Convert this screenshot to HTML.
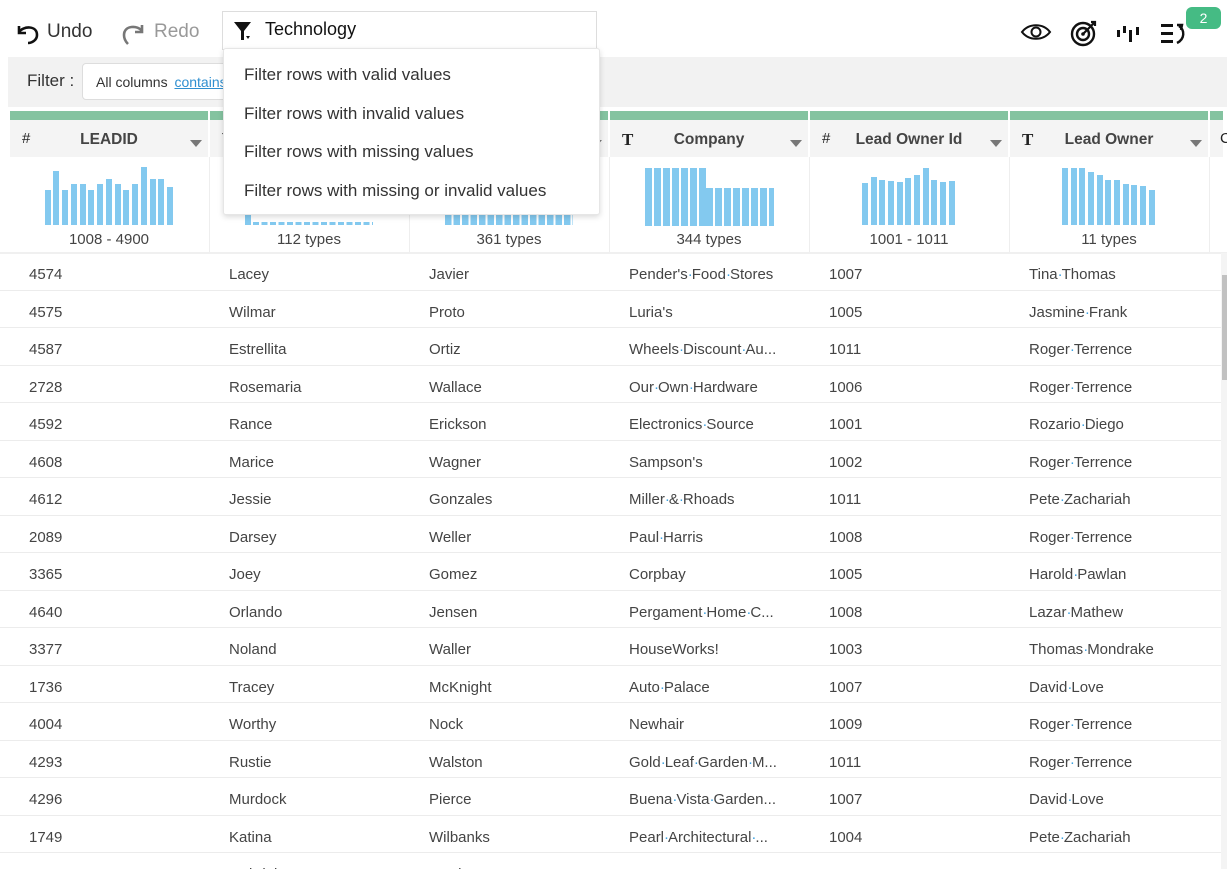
<!DOCTYPE html>
<html><head><meta charset="utf-8">
<style>
*{box-sizing:border-box;margin:0;padding:0}
html,body{width:1227px;height:869px;overflow:hidden}
body{background:#fff;font-family:"Liberation Sans",sans-serif;color:#444;position:relative}
.a{position:absolute}
.bar{position:absolute;background:#83c9ef;top:auto;width:6px}
.hd{position:absolute;top:120px;height:37px;background:#f4f4f4;width:198px;font-size:15.5px;font-weight:bold;color:#444}
.hd .t{position:absolute;left:0;right:0;top:11px;text-align:center}
.hd .ic{position:absolute;left:12px;top:10px;font-size:15px;color:#222;font-weight:normal}
.hd .ar{position:absolute;right:6px;top:20px;width:0;height:0;border-left:6px solid transparent;border-right:6px solid transparent;border-top:7px solid #777}
.gr{position:absolute;top:111px;height:9px;background:#84c3a0;width:198px}
.lab{position:absolute;top:231px;width:198px;text-align:center;font-size:15px;color:#444}
.row{position:absolute;left:0;width:1221px;height:37.5px;border-bottom:1px solid #ececec;font-size:15px;color:#444}
.row span{position:absolute;top:13px;white-space:nowrap}
.row span:nth-child(1){left:29px}.row span:nth-child(2){left:229px}.row span:nth-child(3){left:429px}
.row span:nth-child(4){left:629px}.row span:nth-child(5){left:829px}.row span:nth-child(6){left:1029px}
i{font-style:normal;color:#3ba0e0;display:inline-block;width:4px;text-align:center}
.dd div{position:absolute;left:20px;font-size:17px;color:#333}
</style></head><body>
<svg class="a" style="left:15px;top:21px" width="26" height="24" viewBox="0 0 26 24"><path d="M4 5 L4 12 L11 12 M4 11 C8 5 22 4 22 14 C22 19 17 22 13 22" fill="none" stroke="#111" stroke-width="2.6"/></svg>
<div class="a" style="left:47px;top:21px;font-size:19px;color:#333">Undo</div>
<svg class="a" style="left:120px;top:21px" width="26" height="26" viewBox="0 0 26 26"><path d="M22 4 L22 11 L15 11 M22 10 C18 4 4 4 4 14 C4 18 6 21 8 23" fill="none" stroke="#777" stroke-width="2.6"/></svg>
<div class="a" style="left:154px;top:21px;font-size:19px;color:#999">Redo</div>
<div class="a" style="left:222px;top:11px;width:375px;height:39px;border:1px solid #ddd;background:#fff"></div>
<svg class="a" style="left:233px;top:21px" width="22" height="20" viewBox="0 0 22 20"><path d="M1 1 L18 1 L11 10 L11 19 L8 19 L8 10 Z" fill="#111"/><path d="M13 15 L17 15 L15 18Z" fill="#111"/></svg>
<div class="a" style="left:265px;top:19px;font-size:18px;color:#111">Technology</div>
<svg class="a" style="left:1020px;top:22px" width="32" height="20" viewBox="0 0 32 20"><path d="M2 10 C9 1 23 1 30 10 C23 19 9 19 2 10Z" fill="none" stroke="#111" stroke-width="2"/><circle cx="16" cy="10" r="4.5" fill="none" stroke="#111" stroke-width="2"/></svg>
<svg class="a" style="left:1070px;top:19px" width="28" height="28" viewBox="0 0 28 28"><circle cx="13" cy="15" r="11" fill="none" stroke="#111" stroke-width="2.4"/><circle cx="13" cy="15" r="6" fill="none" stroke="#111" stroke-width="2.4"/><circle cx="13" cy="15" r="1.8" fill="#111"/><path d="M13 15 L24 4 M21 3 L25 3 L25 7" fill="none" stroke="#111" stroke-width="2.2"/></svg>
<svg class="a" style="left:1116px;top:25px" width="26" height="18" viewBox="0 0 26 18"><rect x="1" y="5" width="3" height="7" fill="#111"/><rect x="7" y="1" width="3" height="7" fill="#111"/><rect x="13" y="5" width="3" height="12" fill="#111"/><rect x="20" y="2" width="3" height="8" fill="#111"/></svg>
<svg class="a" style="left:1160px;top:22px" width="28" height="24" viewBox="0 0 28 24"><rect x="1" y="2" width="12" height="3" fill="#111"/><rect x="1" y="10" width="12" height="3" fill="#111"/><rect x="1" y="18" width="12" height="3" fill="#111"/><path d="M17 21 C25 17 25 8 19 4 M17 3 L22 3 L21 8" fill="none" stroke="#111" stroke-width="2.4"/></svg>
<div class="a" style="left:1186px;top:7px;width:35px;height:22px;background:#45bb84;border-radius:6px;color:#fff;font-size:14px;text-align:center;line-height:22px">2</div>
<div class="a" style="left:8px;top:57px;width:1219px;height:50px;background:#f2f2f2"></div>
<div class="a" style="left:27px;top:71px;font-size:17px;color:#333">Filter :</div>
<div class="a" style="left:82px;top:63px;width:160px;height:37px;background:#fff;border:1px solid #ddd;border-radius:4px"></div>
<div class="a" style="left:96px;top:74px;font-size:14px;color:#333">All columns <span style="color:#2f8fd0;text-decoration:underline;margin-left:3px">contains</span></div>
<div class="gr" style="left:10px"></div><div class="gr" style="left:210px"></div><div class="gr" style="left:410px"></div><div class="gr" style="left:610px"></div><div class="gr" style="left:810px"></div><div class="gr" style="left:1010px"></div><div class="gr" style="left:1210px;width:13px"></div>
<div class="hd" style="left:10px"><span class="ic">#</span><div class="t">LEADID</div><span class="ar"></span></div>
<div class="hd" style="left:210px"><span class="ic">T</span><div class="t">First Name</div><span class="ar"></span></div>
<div class="hd" style="left:410px"><span class="ic">T</span><div class="t">Last Name</div><span class="ar"></span></div>
<div class="hd" style="left:610px"><span class="ic" style="font-family:'Liberation Serif',serif;font-weight:bold;font-size:17px">T</span><div class="t">Company</div><span class="ar"></span></div>
<div class="hd" style="left:810px"><span class="ic">#</span><div class="t">Lead Owner Id</div><span class="ar"></span></div>
<div class="hd" style="left:1010px"><span class="ic" style="font-family:'Liberation Serif',serif;font-weight:bold;font-size:17px">T</span><div class="t">Lead Owner</div><span class="ar"></span></div>
<div class="hd" style="left:1210px;width:13px"><span class="ic" style="left:10px">C</span></div>
<div class="a" style="left:209px;top:157px;width:1px;height:95px;background:#eee"></div>
<div class="a" style="left:409px;top:157px;width:1px;height:95px;background:#eee"></div>
<div class="a" style="left:609px;top:157px;width:1px;height:95px;background:#eee"></div>
<div class="a" style="left:809px;top:157px;width:1px;height:95px;background:#eee"></div>
<div class="a" style="left:1009px;top:157px;width:1px;height:95px;background:#eee"></div>
<div class="a" style="left:1209px;top:157px;width:1px;height:95px;background:#eee"></div>
<div class="a" style="left:0;top:252px;width:1227px;height:2px;background:#f0f0f0"></div>
<div class="lab" style="left:10px">1008 - 4900</div>
<div class="lab" style="left:210px">112 types</div>
<div class="lab" style="left:410px">361 types</div>
<div class="lab" style="left:610px">344 types</div>
<div class="lab" style="left:810px">1001 - 1011</div>
<div class="lab" style="left:1010px">11 types</div>
<div class="bar" style="left:45px;top:190px;height:35px"></div><div class="bar" style="left:53px;top:171px;height:54px"></div><div class="bar" style="left:62px;top:190px;height:35px"></div><div class="bar" style="left:71px;top:184px;height:41px"></div><div class="bar" style="left:80px;top:184px;height:41px"></div><div class="bar" style="left:88px;top:190px;height:35px"></div><div class="bar" style="left:97px;top:184px;height:41px"></div><div class="bar" style="left:106px;top:179px;height:46px"></div><div class="bar" style="left:115px;top:184px;height:41px"></div><div class="bar" style="left:123px;top:190px;height:35px"></div><div class="bar" style="left:132px;top:184px;height:41px"></div><div class="bar" style="left:141px;top:167px;height:58px"></div><div class="bar" style="left:150px;top:179px;height:46px"></div><div class="bar" style="left:158px;top:179px;height:46px"></div><div class="bar" style="left:167px;top:187px;height:38px"></div>
<div class="bar" style="left:245px;top:215px;height:10px"></div>
<div class="a" style="left:253px;top:222px;width:120px;height:3px;background:repeating-linear-gradient(90deg,#83c9ef 0 6px,transparent 6px 8.5px)"></div>
<div class="a" style="left:445px;top:214px;width:128px;height:11px;background:repeating-linear-gradient(90deg,#83c9ef 0 6.5px,transparent 6.5px 8.5px)"></div>
<div class="a" style="left:645px;top:168px;width:62px;height:58px;background:repeating-linear-gradient(90deg,#83c9ef 0 7px,transparent 7px 9px)"></div>
<div class="a" style="left:706px;top:188px;width:68px;height:38px;background:repeating-linear-gradient(90deg,#83c9ef 0 7px,transparent 7px 9px)"></div>
<div class="bar" style="left:862px;top:183px;height:42px"></div><div class="bar" style="left:871px;top:177px;height:48px"></div><div class="bar" style="left:879px;top:180px;height:45px"></div><div class="bar" style="left:888px;top:181px;height:44px"></div><div class="bar" style="left:897px;top:182px;height:43px"></div><div class="bar" style="left:905px;top:178px;height:47px"></div><div class="bar" style="left:914px;top:175px;height:50px"></div><div class="bar" style="left:923px;top:168px;height:57px"></div><div class="bar" style="left:931px;top:180px;height:45px"></div><div class="bar" style="left:940px;top:182px;height:43px"></div><div class="bar" style="left:949px;top:181px;height:44px"></div>
<div class="bar" style="left:1062px;top:168px;height:57px"></div><div class="bar" style="left:1071px;top:168px;height:57px"></div><div class="bar" style="left:1079px;top:168px;height:57px"></div><div class="bar" style="left:1088px;top:172px;height:53px"></div><div class="bar" style="left:1097px;top:175px;height:50px"></div><div class="bar" style="left:1105px;top:180px;height:45px"></div><div class="bar" style="left:1114px;top:180px;height:45px"></div><div class="bar" style="left:1123px;top:184px;height:41px"></div><div class="bar" style="left:1131px;top:185px;height:40px"></div><div class="bar" style="left:1140px;top:186px;height:39px"></div><div class="bar" style="left:1149px;top:190px;height:35px"></div>
<div class="row" style="top:253px"><span>4574</span><span>Lacey</span><span>Javier</span><span>Pender's<i>·</i>Food<i>·</i>Stores</span><span>1007</span><span>Tina<i>·</i>Thomas</span></div>
<div class="row" style="top:290.5px"><span>4575</span><span>Wilmar</span><span>Proto</span><span>Luria's</span><span>1005</span><span>Jasmine<i>·</i>Frank</span></div>
<div class="row" style="top:328px"><span>4587</span><span>Estrellita</span><span>Ortiz</span><span>Wheels<i>·</i>Discount<i>·</i>Au...</span><span>1011</span><span>Roger<i>·</i>Terrence</span></div>
<div class="row" style="top:365.5px"><span>2728</span><span>Rosemaria</span><span>Wallace</span><span>Our<i>·</i>Own<i>·</i>Hardware</span><span>1006</span><span>Roger<i>·</i>Terrence</span></div>
<div class="row" style="top:403px"><span>4592</span><span>Rance</span><span>Erickson</span><span>Electronics<i>·</i>Source</span><span>1001</span><span>Rozario<i>·</i>Diego</span></div>
<div class="row" style="top:440.5px"><span>4608</span><span>Marice</span><span>Wagner</span><span>Sampson's</span><span>1002</span><span>Roger<i>·</i>Terrence</span></div>
<div class="row" style="top:478px"><span>4612</span><span>Jessie</span><span>Gonzales</span><span>Miller<i>·</i>&amp;<i>·</i>Rhoads</span><span>1011</span><span>Pete<i>·</i>Zachariah</span></div>
<div class="row" style="top:515.5px"><span>2089</span><span>Darsey</span><span>Weller</span><span>Paul<i>·</i>Harris</span><span>1008</span><span>Roger<i>·</i>Terrence</span></div>
<div class="row" style="top:553px"><span>3365</span><span>Joey</span><span>Gomez</span><span>Corpbay</span><span>1005</span><span>Harold<i>·</i>Pawlan</span></div>
<div class="row" style="top:590.5px"><span>4640</span><span>Orlando</span><span>Jensen</span><span>Pergament<i>·</i>Home<i>·</i>C...</span><span>1008</span><span>Lazar<i>·</i>Mathew</span></div>
<div class="row" style="top:628px"><span>3377</span><span>Noland</span><span>Waller</span><span>HouseWorks!</span><span>1003</span><span>Thomas<i>·</i>Mondrake</span></div>
<div class="row" style="top:665.5px"><span>1736</span><span>Tracey</span><span>McKnight</span><span>Auto<i>·</i>Palace</span><span>1007</span><span>David<i>·</i>Love</span></div>
<div class="row" style="top:703px"><span>4004</span><span>Worthy</span><span>Nock</span><span>Newhair</span><span>1009</span><span>Roger<i>·</i>Terrence</span></div>
<div class="row" style="top:740.5px"><span>4293</span><span>Rustie</span><span>Walston</span><span>Gold<i>·</i>Leaf<i>·</i>Garden<i>·</i>M...</span><span>1011</span><span>Roger<i>·</i>Terrence</span></div>
<div class="row" style="top:778px"><span>4296</span><span>Murdock</span><span>Pierce</span><span>Buena<i>·</i>Vista<i>·</i>Garden...</span><span>1007</span><span>David<i>·</i>Love</span></div>
<div class="row" style="top:815.5px"><span>1749</span><span>Katina</span><span>Wilbanks</span><span>Pearl<i>·</i>Architectural<i>·</i>...</span><span>1004</span><span>Pete<i>·</i>Zachariah</span></div>
<div class="row" style="top:853px;height:16px;border:0;overflow:hidden"><span>3820</span><span>Gabriel</span><span>Bowles</span><span></span><span>1007</span><span></span></div>
<div class="a" style="left:1221px;top:253px;width:6px;height:616px;background:#f4f4f4"></div>
<div class="a" style="left:1222px;top:275px;width:5px;height:105px;background:#c1c1c1"></div>
<div class="a dd" style="left:223px;top:48px;width:377px;height:167px;background:#fff;border:1px solid #e6e6e6;border-radius:3px;box-shadow:0 2px 6px rgba(0,0,0,0.15)">
<div style="top:16px">Filter rows with valid values</div>
<div style="top:55px">Filter rows with invalid values</div>
<div style="top:93px">Filter rows with missing values</div>
<div style="top:132px">Filter rows with missing or invalid values</div>
</div>
</body></html>
